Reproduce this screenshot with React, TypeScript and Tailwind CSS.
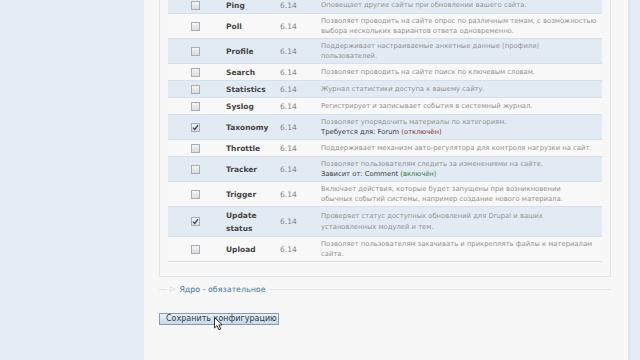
import React from "react";

type Row = {
  name: string[];
  checked?: boolean;
  desc: string[];
  note?: { label: string; link: string; state: string; on: boolean };
};

const rows: Row[] = [
  { name: ["Ping"], desc: ["Оповещает другие сайты при обновлении вашего сайта."] },
  {
    name: ["Poll"],
    desc: [
      "Позволяет проводить на сайте опрос по различным темам, с возможностью",
      "выбора нескольких вариантов ответа одновременно.",
    ],
  },
  {
    name: ["Profile"],
    desc: ["Поддерживает настраиваемые анкетные данные (профили)", "пользователей."],
  },
  { name: ["Search"], desc: ["Позволяет проводить на сайте поиск по ключевым словам."] },
  { name: ["Statistics"], desc: ["Журнал статистики доступа к вашему сайту."] },
  { name: ["Syslog"], desc: ["Регистрирует и записывает события в системный журнал."] },
  {
    name: ["Taxonomy"],
    checked: true,
    desc: ["Позволяет упорядочить материалы по категориям."],
    note: { label: "Требуется для:", link: "Forum", state: "(отключён)", on: false },
  },
  {
    name: ["Throttle"],
    desc: ["Поддерживает механизм авто-регулятора для контроля нагрузки на сайт."],
  },
  {
    name: ["Tracker"],
    desc: ["Позволяет пользователям следить за изменениями на сайте."],
    note: { label: "Зависит от:", link: "Comment", state: "(включён)", on: true },
  },
  {
    name: ["Trigger"],
    desc: [
      "Включает действия, которые будет запущены при возникновении",
      "обычных событий системы, например создание нового материала.",
    ],
  },
  {
    name: ["Update", "status"],
    checked: true,
    desc: [
      "Проверяет статус доступных обновлений для Drupal и ваших",
      "установленных модулей и тем.",
    ],
  },
  {
    name: ["Upload"],
    desc: [
      "Позволяет пользователям закачивать и прикреплять файлы к материалам",
      "сайта.",
    ],
  },
];

const Checkbox = ({ checked }: { checked?: boolean }) => (
  <span className="flex h-[9px] w-[9px] items-center justify-center border border-[#a9aeb4] bg-gradient-to-b from-[#f4f4f4] to-[#d9dce0]">
    {checked && (
      <svg width="7" height="7" viewBox="0 0 7 7">
        <path d="M1 3.6 L2.8 5.4 L6 1.2" fill="none" stroke="#27446e" strokeWidth="1.3" />
      </svg>
    )}
  </span>
);

const ModuleRow = ({ row, odd }: { row: Row; odd: boolean }) => (
  <div
    className={`flex items-center border-b border-[#d6e0ea] py-[1.5px] ${
      odd ? "bg-[#e2ebf4]" : "bg-[#f8f8f8]"
    }`}
  >
    <div className="flex w-[54px] shrink-0 justify-center">
      <Checkbox checked={row.checked} />
    </div>
    <div className="w-[54px] shrink-0 pl-[4px] text-[7.5px] font-bold leading-[13px] text-[#444]">
      {row.name.map((n) => (
        <div key={n}>{n}</div>
      ))}
    </div>
    <div className="w-[41px] shrink-0 pl-[4px] text-[7.5px] leading-[13px] text-[#858585]">6.14</div>
    <div className="flex-1 pl-[4px] text-[6.8px] leading-[10.5px] text-[#939393] whitespace-nowrap">
      {row.desc.map((d) => (
        <div key={d}>{d}</div>
      ))}
      {row.note && (
        <div className="text-[#3a3a3a]">
          {row.note.label} {row.note.link}{" "}
          <span className={row.note.on ? "text-[#2e7d32]" : "text-[#8b2c2c]"}>{row.note.state}</span>
        </div>
      )}
    </div>
  </div>
);

const Cursor = () => (
  <svg
    className="absolute left-[214px] top-[317px]"
    width="10"
    height="14"
    viewBox="0 0 10 14"
  >
    <path
      d="M0.5 0.5 L0.5 11 L3 8.6 L5 12.8 L6.8 12 L4.9 7.9 L8.2 7.9 Z"
      fill="#fff"
      stroke="#333"
      strokeWidth="1"
    />
  </svg>
);

export default function App() {
  return (
    <div className="relative flex h-[360px] w-[640px] overflow-hidden bg-[#e4ecf5] font-['DejaVu_Sans','Liberation_Sans',sans-serif]">
      <div className="w-[144px] shrink-0" />
      <main className="w-[484px] shrink-0 bg-[#f7f7f7] pl-[15px] pr-[17px]">
        <div className="-mt-[3px] border-x border-b border-[#dfe6ed] px-[8px] pb-[14px]">
          {rows.map((r, i) => (
            <ModuleRow key={r.name.join(" ")} row={r} odd={i % 2 === 0} />
          ))}
        </div>

        <div className="mt-[7px] flex items-center">
          <span className="w-[8px] border-t border-[#e3e7ec]" />
          <span className="flex items-center gap-[4px] px-[3px] text-[7.9px] text-[#3f78a8]">
            <span className="text-[7px] leading-none text-[#bfc5cc]">▷</span>
            Ядро - обязательное
          </span>
          <span className="flex-1 border-t border-[#e3e7ec]" />
        </div>

        <button className="mt-[17px] h-[12px] w-[120px] whitespace-nowrap border border-[#7f9fbe] bg-gradient-to-b from-[#e9f0f7] to-[#c9d9ea] pl-[6px] text-left text-[8px] leading-[10px] text-[#2e3a46]">
          Сохранить конфигурацию
        </button>
      </main>
      <div className="flex-1 border-l-[3px] border-[#dde6f0] bg-[#e6edf6]" />
      <Cursor />
    </div>
  );
}
